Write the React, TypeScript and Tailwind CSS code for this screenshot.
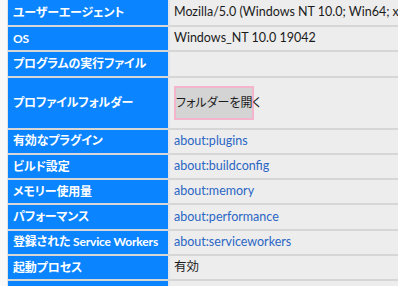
import React from "react";

type Row = {
  label: string;
  value?: string;
  kind?: "text" | "link" | "button" | "empty";
  tall?: boolean;
};

const ROWS: Row[] = [
  { label: "ユーザーエージェント", value: "Mozilla/5.0 (Windows NT 10.0; Win64; x64; rv:109.0) Gecko/20100101 Firefox/115.0", kind: "text" },
  { label: "OS", value: "Windows_NT 10.0 19042", kind: "text" },
  { label: "プログラムの実行ファイル", kind: "empty" },
  { label: "プロファイルフォルダー", value: "フォルダーを開く", kind: "button", tall: true },
  { label: "有効なプラグイン", value: "about:plugins", kind: "link" },
  { label: "ビルド設定", value: "about:buildconfig", kind: "link" },
  { label: "メモリー使用量", value: "about:memory", kind: "link" },
  { label: "パフォーマンス", value: "about:performance", kind: "link" },
  { label: "登録された Service Workers", value: "about:serviceworkers", kind: "link" },
  { label: "起動プロセス", value: "有効", kind: "text" },
  { label: "マルチプロセスウィンドウ", value: "1/1", kind: "text" },
];

const FONT = {
  fontFamily: 'Lato, "Noto Sans CJK JP", sans-serif',
  fontFeatureSettings: '"palt"',
};

export default function App() {
  return (
    <div className="h-[286px] w-[398px] overflow-hidden bg-[#f9f9fa]" style={FONT}>
      <div className="ml-[7px] flex w-[420px] flex-col gap-[2px] border-l border-[#e3e3e3] bg-[#d6d6d6]">
        {ROWS.map((row, i) => (
          <div key={row.label} className="flex gap-[2px] bg-[#e2e6ec]">
            <div
              className={`flex w-[160px] shrink-0 items-center bg-[#0a84ff] pl-[5px] text-[12px] font-bold tracking-[-0.15px] text-white ${
                row.tall ? "h-[50px]" : i === 0 ? "h-[25px]" : "h-[23.3px]"
              }`}
            >
              <span className="whitespace-nowrap">{row.label}</span>
            </div>
            <div className="flex flex-1 items-center whitespace-nowrap bg-[#ededed] pl-[4px] text-[12.5px] text-[#1b1b1b]">
              {row.kind === "text" && <span>{row.value}</span>}
              {row.kind === "link" && <span className="text-[#2a66c4]">{row.value}</span>}
              {row.kind === "button" && (
                <button className="h-[34px] w-[80px] border-2 border-[#f4b4cb] bg-[#d4d4d4] text-[12px] text-[#1b1b1b]">
                  {row.value}
                </button>
              )}
            </div>
          </div>
        ))}
      </div>
    </div>
  );
}
